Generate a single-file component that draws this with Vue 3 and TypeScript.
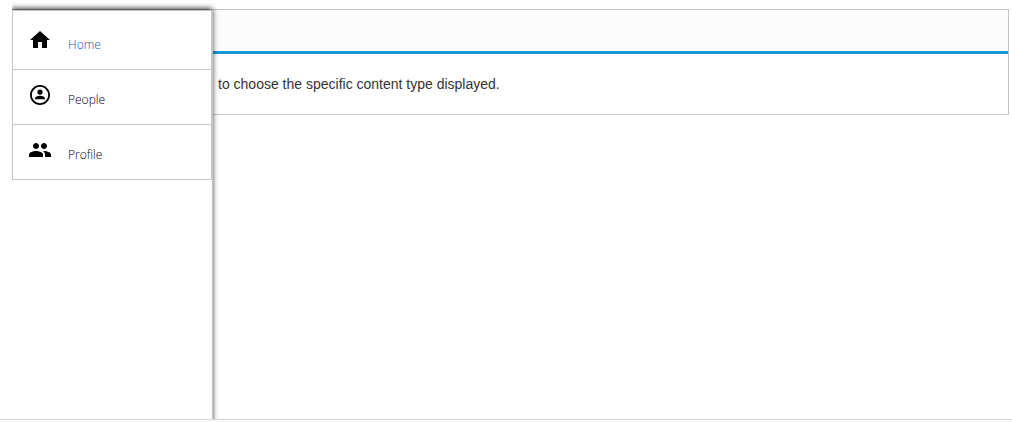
<script setup lang="ts">
interface NavItem {
  label: string
  active: boolean
  path: string
}

const items: NavItem[] = [
  { label: 'Home', active: true, path: 'M10 20v-6h4v6h5v-8h3L12 3 2 12h3v8z' },
  {
    label: 'People',
    active: false,
    path: 'M12 2C6.48 2 2 6.48 2 12s4.48 10 10 10 10-4.48 10-10S17.52 2 12 2zm0 18.2a8.2 8.2 0 1 1 0-16.4 8.2 8.2 0 0 1 0 16.4zM12 6.5a2.6 2.6 0 1 0 0 5.2 2.6 2.6 0 0 0 0-5.2zM7 16.3h10v-.9c0-1.9-3.3-2.7-5-2.7s-5 .8-5 2.7z',
  },
  {
    label: 'Profile',
    active: false,
    path: 'M16 11c1.66 0 2.99-1.34 2.99-3S17.66 5 16 5s-3 1.34-3 3 1.34 3 3 3zm-8 0c1.66 0 2.99-1.34 2.99-3S9.66 5 8 5 5 6.34 5 8s1.34 3 3 3zm0 2c-2.33 0-7 1.17-7 3.5V19h14v-2.5c0-2.33-4.67-3.5-7-3.5zm8 0c-.29 0-.62.02-.97.05 1.16.84 1.97 1.97 1.97 3.45V19h6v-2.5c0-2.33-4.67-3.5-7-3.5z',
  },
]
</script>

<template>
  <div class="page">
    <div class="stage">
      <main class="panel">
        <header class="panel-head"></header>
        <p class="panel-text">to choose the specific content type displayed.</p>
      </main>
      <div class="drawer-clip">
        <nav class="drawer">
          <ul class="menu">
            <li v-for="item in items" :key="item.label" class="menu-item">
              <a href="#" class="menu-link" :class="{ active: item.active }">
                <svg class="icon" viewBox="0 0 24 24" aria-hidden="true"><path :d="item.path" /></svg>
                <span class="label">{{ item.label }}</span>
              </a>
            </li>
          </ul>
        </nav>
      </div>
    </div>
    <footer class="foot"></footer>
  </div>
</template>

<style>
body {
  margin: 0;
  background: #fff;
}
</style>

<style scoped>
.page {
  display: flex;
  flex-direction: column;
  min-height: 100vh;
  font-family: "Liberation Sans", Arial, sans-serif;
}
.stage {
  position: relative;
  flex: 1;
  padding: 9px 3px 0 12px;
}
.panel {
  border: 1px solid #c4c4c4;
  background: #fff;
}
.panel-head {
  height: 41px;
  background: #fcfcfc;
  border-bottom: 3px solid #1a98d5;
}
.panel-text {
  margin: 0;
  padding: 20px 16px 20px 205px;
  font-size: 14px;
  line-height: 20px;
  color: #333;
}
.drawer-clip {
  position: absolute;
  top: 0;
  bottom: 0;
  left: 12px;
  display: flex;
  padding: 10px 12px 0 0;
  overflow: hidden;
}
.drawer {
  width: 200px;
  margin-bottom: -12px;
  background: #fff;
  border-right: 1px solid #c4c4c4;
  box-shadow: -1px -1px 6px #111;
}
.menu {
  margin: 0;
  padding: 0;
  list-style: none;
  border: 1px solid #c4c4c4;
  border-bottom: 0;
}
.menu-item {
  border-bottom: 1px solid #c4c4c4;
}
.menu-link {
  display: flex;
  align-items: flex-start;
  gap: 16px;
  padding: 13px 15px 16px;
  font-family: "Open Sans", "Noto Sans", sans-serif;
  font-size: 12px;
  font-weight: 300;
  line-height: 16px;
  color: #000;
  text-decoration: none;
}
.menu-item:first-child .menu-link {
  padding-top: 17px;
}
.menu-link.active {
  color: #0b5ca8;
}
.icon {
  width: 24px;
  height: 24px;
  fill: #000;
}
.label {
  padding-top: 9px;
}
.foot {
  height: 2px;
  border-top: 1px solid #d8d8d8;
  background: #f8f8f8;
}
</style>
